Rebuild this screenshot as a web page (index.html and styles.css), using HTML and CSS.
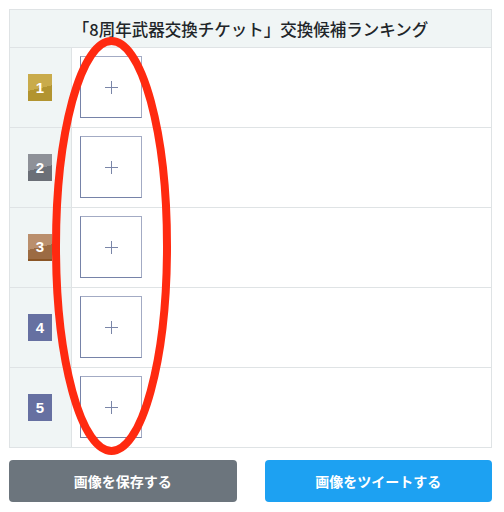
FILE: index.html
```html
<!DOCTYPE html>
<html>

<head>
    <meta name="viewport" content="width=device-width, initial-scale=1.0">
    <title>交換候補ランキング</title>
    <link rel="stylesheet" href="styles.css">
</head>

<body>
    <div class="page">
        <div class="ranking">
            <div class="ranking-title">「8周年武器交換チケット」交換候補ランキング</div>

            <div class="rank-row">
                <div class="rank-cell"><span class="badge gold">1</span></div>
                <div class="item-cell"><div class="slot"></div></div>
            </div>
            <div class="rank-row">
                <div class="rank-cell"><span class="badge silver">2</span></div>
                <div class="item-cell"><div class="slot"></div></div>
            </div>
            <div class="rank-row">
                <div class="rank-cell"><span class="badge bronze">3</span></div>
                <div class="item-cell"><div class="slot"></div></div>
            </div>
            <div class="rank-row">
                <div class="rank-cell"><span class="badge plain">4</span></div>
                <div class="item-cell"><div class="slot"></div></div>
            </div>
            <div class="rank-row">
                <div class="rank-cell"><span class="badge plain">5</span></div>
                <div class="item-cell"><div class="slot"></div></div>
            </div>
        </div>

        <div class="actions">
            <button class="btn btn-save">画像を保存する</button>
            <button class="btn btn-tweet">画像をツイートする</button>
        </div>

        <svg class="mark" width="119" height="418" viewBox="0 0 119 418">
            <ellipse cx="59.5" cy="209" rx="55.5" ry="205" fill="none" stroke="#ff2a10" stroke-width="8" />
        </svg>
    </div>
</body>

</html>
```

FILE: styles.css
```css
:root {
    --line-color: #dfe3e5;
    --head-bg: #f0f5f5;
    --slot-border: #7683a8;
    --text-color: #212529;
}

* {
    box-sizing: border-box;
}

body {
    margin: 0;
    background: #fff;
    font-family: "Noto Sans CJK JP", "Noto Sans", sans-serif;
    color: var(--text-color);
}

.page {
    position: relative;
    padding: 9px 12px 0 9px;
}

.ranking {
    border: 1px solid var(--line-color);
}

.ranking-title {
    height: 38px;
    display: flex;
    align-items: center;
    justify-content: center;
    background-color: var(--head-bg);
    border-bottom: 1px solid var(--line-color);
    font-size: 16.5px;
    font-weight: 500;
}

.rank-row {
    display: flex;
    height: 80px;
    border-bottom: 1px solid var(--line-color);
}

.rank-row:last-child {
    border-bottom: none;
    height: 79px;
}

.rank-cell {
    width: 62px;
    display: flex;
    align-items: center;
    justify-content: center;
    background-color: var(--head-bg);
    border-right: 1px solid var(--line-color);
}

.item-cell {
    flex: 1;
    padding: 8px 0 0 8px;
}

.slot {
    position: relative;
    width: 62px;
    height: 62px;
    border: 1px solid var(--slot-border);
    border-top-color: #a3abc4;
    border-right-color: #a3abc4;
}

.slot::before,
.slot::after {
    content: "";
    position: absolute;
    left: 50%;
    top: 50%;
    background-color: #7a86a8;
}

.slot::before {
    width: 13px;
    height: 1px;
    margin: 0 0 0 -6px;
}

.slot::after {
    width: 1px;
    height: 13px;
    margin: -6px 0 0 0;
}

.badge {
    display: flex;
    align-items: center;
    justify-content: center;
    width: 24px;
    height: 27px;
    margin-right: 1px;
    font-family: "Liberation Sans", Arial, sans-serif;
    font-size: 15px;
    font-weight: 700;
    color: #fff;
}

.badge.gold {
    background: linear-gradient(167deg, #c9ab4b 52%, #b29430 52%);
}

.badge.silver {
    background: linear-gradient(167deg, #8e9198 52%, #6b6f77 52%);
}

.badge.bronze {
    background: linear-gradient(167deg, #ba8f6d 52%, #9c6b43 52%);
    border-bottom: 2px solid #8a5526;
}

.badge.plain {
    background-color: #6670a1;
}

.actions {
    display: flex;
    gap: 28px;
    margin-top: 12px;
}

.btn {
    flex: 1;
    height: 42px;
    border: none;
    border-radius: 4px;
    font-family: "Noto Sans CJK JP", sans-serif;
    font-size: 14px;
    font-weight: 700;
    color: #fff;
    cursor: pointer;
}

.btn-save {
    background-color: #6c757d;
}

.btn-tweet {
    background-color: #1da1f2;
}

.mark {
    position: absolute;
    left: 52px;
    top: 37px;
}
```
